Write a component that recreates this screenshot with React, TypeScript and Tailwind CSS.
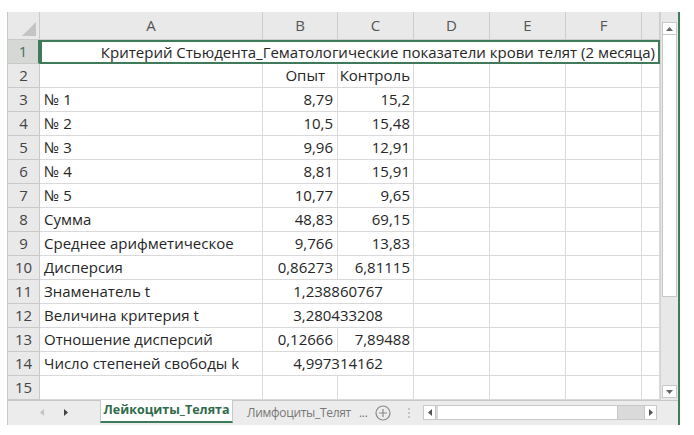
import React from 'react';

type Row = {
  a?: string;
  b?: string;
  c?: string;
  merged?: string;
  title?: string;
  bLeftPad?: boolean;
};

const rows: Row[] = [
  { title: 'Критерий Стьюдента_Гематологические показатели крови телят (2 месяца)' },
  { a: '', b: 'Опыт', c: 'Контроль', bLeftPad: true },
  { a: '№ 1', b: '8,79', c: '15,2' },
  { a: '№ 2', b: '10,5', c: '15,48' },
  { a: '№ 3', b: '9,96', c: '12,91' },
  { a: '№ 4', b: '8,81', c: '15,91' },
  { a: '№ 5', b: '10,77', c: '9,65' },
  { a: 'Сумма', b: '48,83', c: '69,15' },
  { a: 'Среднее арифметическое', b: '9,766', c: '13,83' },
  { a: 'Дисперсия', b: '0,86273', c: '6,81115' },
  { a: 'Знаменатель t', merged: '1,238860767' },
  { a: 'Величина критерия t', merged: '3,280433208' },
  { a: 'Отношение дисперсий', b: '0,12666', c: '7,89488' },
  { a: 'Число степеней свободы k', merged: '4,997314162' },
  {},
];

const cols = ['A', 'B', 'C', 'D', 'E', 'F', ''];

const cell = 'h-[24px] border-r border-b border-[#d9d9d9] flex items-center overflow-hidden whitespace-nowrap';

export default function App() {
  return (
    <div
      className="w-[694px] h-[435px] bg-white pt-[12px] pl-[7px] text-[#262626]"
      style={{ fontFamily: '"Open Sans", "Noto Sans", sans-serif' }}
    >
      <div className="w-[673px] h-[413px] border-l border-[#c8c8c8] border-r-2 border-r-[#3f7a5a] flex flex-col">
        <div className="flex h-[388px]">
          {/* grid */}
          <div className="grid grid-cols-[32px_223px_75px_76px_76px_76px_76px_18px] grid-rows-[28px_repeat(15,24px)] w-[652px] text-[15px]">
            {/* corner */}
            <div className="h-[28px] bg-[#e9e9e9] border-r border-b border-[#c9c9c9] relative">
              <svg className="absolute right-[3px] bottom-[3px]" width="14" height="14" viewBox="0 0 14 14">
                <polygon points="14,0 14,14 0,14" fill="#c4c4c4" />
              </svg>
            </div>
            {cols.map((c, i) => (
              <div
                key={i}
                className="h-[28px] bg-[#e9e9e9] border-r border-b border-[#cdcdcd] flex items-center justify-center text-[15px] text-[#555]"
              >
                {c}
              </div>
            ))}
            {rows.map((r, i) => {
              const num = i + 1;
              const head = (
                <div
                  key={`h${i}`}
                  className={
                    num === 1
                      ? 'h-[24px] bg-[#d6d8d6] border-r-2 border-r-[#3f7a5a] border-b border-[#c9c9c9] flex items-center justify-center text-[15px] text-[#42705a]'
                      : 'h-[24px] bg-[#e9e9e9] border-r border-b border-[#c9c9c9] flex items-center justify-center text-[15px] text-[#444]'
                  }
                >
                  {num}
                </div>
              );
              if (r.title) {
                return (
                  <React.Fragment key={i}>
                    {head}
                    <div className="col-span-7 h-[24px] border-2 border-[#3f7a5a] flex items-center justify-end pr-[3px] whitespace-nowrap overflow-hidden text-[15px]">
                      {r.title}
                    </div>
                  </React.Fragment>
                );
              }
              return (
                <React.Fragment key={i}>
                  {head}
                  <div className={`${cell} pl-[4px]`}>{r.a}</div>
                  {r.merged ? (
                    <div className={`${cell} col-span-2 justify-center`}>{r.merged}</div>
                  ) : (
                    <>
                      <div className={`${cell} justify-end ${r.bLeftPad ? 'pr-[12px]' : 'pr-[4px]'}`}>{r.b}</div>
                      <div className={`${cell} justify-end pr-[3px]`}>{r.c}</div>
                    </>
                  )}
                  <div className={cell} />
                  <div className={cell} />
                  <div className={cell} />
                  <div className={cell} />
                </React.Fragment>
              );
            })}
          </div>
          {/* vertical scrollbar */}
          <div className="w-[19px] bg-[#e8e8e8] flex flex-col items-center pt-[10px] pb-[2px] border-l border-[#d4d4d4]">
            <div className="w-[15px] h-[13px] bg-white border border-[#c8c8c8] flex items-center justify-center">
              <svg width="7" height="4" viewBox="0 0 7 4">
                <polygon points="3.5,0 7,4 0,4" fill="#666" />
              </svg>
            </div>
            <div className="w-[15px] h-[262px] bg-white border border-[#c8c8c8] border-t-0" />
            <div className="flex-1" />
            <div className="w-[15px] h-[13px] bg-white border border-[#c8c8c8] flex items-center justify-center">
              <svg width="7" height="4" viewBox="0 0 7 4">
                <polygon points="0,0 7,0 3.5,4" fill="#666" />
              </svg>
            </div>
          </div>
        </div>
        {/* tab bar */}
        <div className="h-[25px] bg-[#ececec] border-t border-[#c8c8c8] flex items-start text-[12.5px]">
          <div className="w-[92px] h-[23px] flex items-center pl-[32px] gap-[20px]">
            <svg width="4" height="7" viewBox="0 0 4 7">
              <polygon points="4,0 4,7 0,3.5" fill="#c4c4c4" />
            </svg>
            <svg width="4" height="7" viewBox="0 0 4 7">
              <polygon points="0,0 4,3.5 0,7" fill="#444" />
            </svg>
          </div>
          <div className="w-[133px] h-[23px] bg-white border-l border-r border-[#c8c8c8] border-b-2 border-b-[#3f7a5a] -mt-px flex items-center justify-center font-bold text-[#2f6b4a] text-[12.5px]">
            Лейкоциты_Телята
          </div>
          <div className="w-[142px] h-[23px] flex items-center pl-[14px] text-[#777] text-[12px] tracking-[-0.3px] whitespace-nowrap">
            <span>Лимфоциты_Телят</span>
            <span className="ml-[8px]">...</span>
          </div>
          <div className="h-[23px] flex items-center">
            <svg width="16" height="16" viewBox="0 0 16 16">
              <circle cx="8" cy="8" r="7" fill="none" stroke="#8a8a8a" strokeWidth="1.2" />
              <path d="M8 4v8M4 8h8" stroke="#8a8a8a" strokeWidth="1.2" />
            </svg>
          </div>
          <div className="h-[23px] flex flex-col items-center justify-center gap-[2px] ml-[17px]">
            <div className="w-[2px] h-[2px] bg-[#c4c4c4]" />
            <div className="w-[2px] h-[2px] bg-[#c4c4c4]" />
            <div className="w-[2px] h-[2px] bg-[#c4c4c4]" />
          </div>
          <div className="ml-[13px] mt-[4px] w-[234px] h-[15px] bg-[#dadada] border border-[#c8c8c8] flex">
            <div className="w-[12px] h-full bg-white border-r border-[#c8c8c8] flex items-center justify-center">
              <svg width="4" height="7" viewBox="0 0 4 7">
                <polygon points="4,0 4,7 0,3.5" fill="#555" />
              </svg>
            </div>
            <div className="w-[180px] h-full bg-white ml-[2px] border-r border-[#c8c8c8]" />
            <div className="flex-1" />
            <div className="w-[12px] h-full bg-white border-l border-[#c8c8c8] flex items-center justify-center">
              <svg width="4" height="7" viewBox="0 0 4 7">
                <polygon points="0,0 4,3.5 0,7" fill="#555" />
              </svg>
            </div>
          </div>
        </div>
      </div>
    </div>
  );
}
